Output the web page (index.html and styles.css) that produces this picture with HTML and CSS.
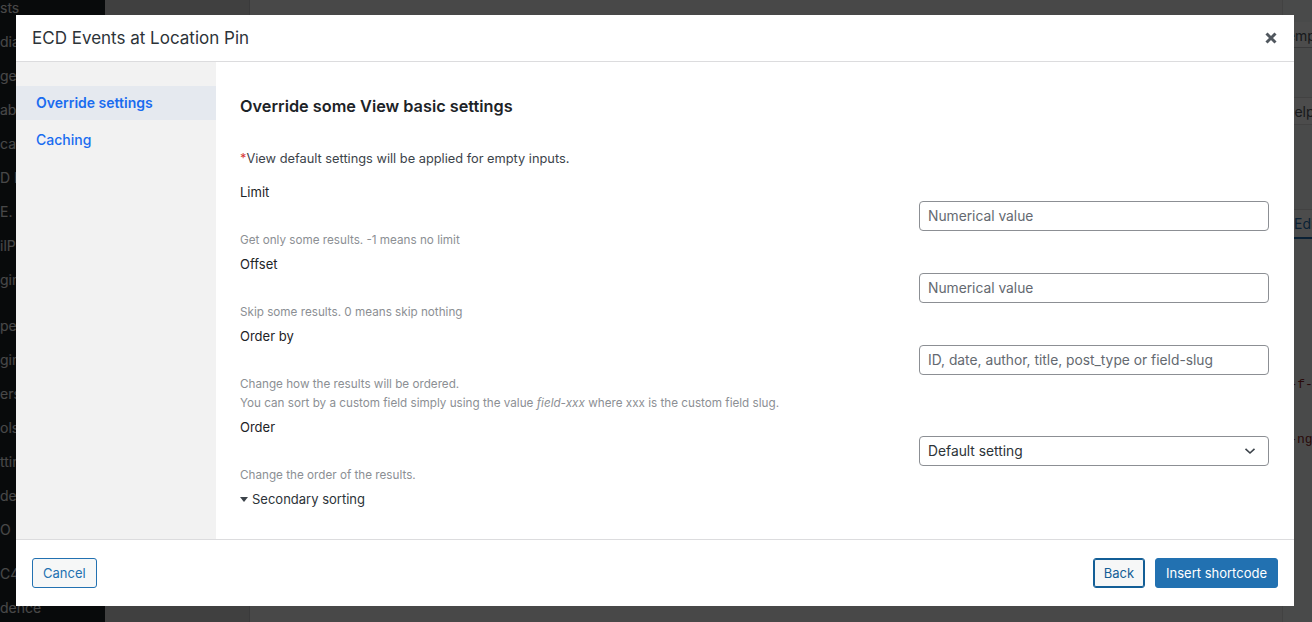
FILE: index.html
```html
<!DOCTYPE html>
<html lang="en">
<head>
<meta charset="utf-8">
<title>ECD Events at Location Pin</title>
<link rel="stylesheet" href="styles.css">
</head>
<body>
<div class="admin">
  <nav class="admin-menu">
    <div class="menu-item">sts</div>
    <div class="menu-item">dia</div>
    <div class="menu-item">ges</div>
    <div class="menu-item">aba</div>
    <div class="menu-item">cat</div>
    <div class="menu-item">D E</div>
    <div class="menu-item">E. C</div>
    <div class="menu-item">ilP</div>
    <div class="menu-item">gin</div>
    <div class="menu-item menu-item--sep">pe</div>
    <div class="menu-item">gin</div>
    <div class="menu-item">ers</div>
    <div class="menu-item">ols</div>
    <div class="menu-item">ttin</div>
    <div class="menu-item">de</div>
    <div class="menu-item">O</div>
    <div class="menu-item menu-item--sep2">C4V</div>
    <div class="menu-item">dence</div>
  </nav>
  <main class="admin-main">
    <div class="side-panel"></div>
    <div class="editor"></div>
    <aside class="meta-col">
      <div class="meta-head">Temp</div>
      <div class="meta-help">Help</div>
      <div class="meta-edit"><span>Edi</span></div>
      <div class="meta-code meta-code--a">wpv-f-</div>
      <div class="meta-code meta-code--b">stri-ng-</div>
    </aside>
  </main>
</div>

<div class="backdrop"></div>

<div class="dialog" role="dialog" aria-labelledby="dialog-title">
  <header class="dialog-header">
    <h1 class="dialog-title" id="dialog-title">ECD Events at Location Pin</h1>
    <button class="dialog-close" type="button" aria-label="Close">
      <svg width="12" height="12" viewBox="0 0 12 12" aria-hidden="true">
        <path d="M1.5 1.5 L10.5 10.5 M10.5 1.5 L1.5 10.5" stroke="#50575e" stroke-width="3" stroke-linecap="butt" fill="none"/>
      </svg>
    </button>
  </header>

  <div class="dialog-body">
    <nav class="dialog-nav">
      <a class="nav-item nav-item--active" href="#">Override settings</a>
      <a class="nav-item" href="#">Caching</a>
    </nav>

    <section class="dialog-content">
      <h2 class="content-title">Override some View basic settings</h2>
      <p class="content-note"><span class="req">*</span>View default settings will be applied for empty inputs.</p>

      <div class="field">
        <label class="field-label" for="f-limit">Limit</label>
        <div class="field-control"><input class="text-input" id="f-limit" type="text" placeholder="Numerical value"></div>
        <p class="field-desc">Get only some results. -1 means no limit</p>
      </div>

      <div class="field">
        <label class="field-label" for="f-offset">Offset</label>
        <div class="field-control"><input class="text-input" id="f-offset" type="text" placeholder="Numerical value"></div>
        <p class="field-desc">Skip some results. 0 means skip nothing</p>
      </div>

      <div class="field">
        <label class="field-label" for="f-orderby">Order by</label>
        <div class="field-control"><input class="text-input" id="f-orderby" type="text" placeholder="ID, date, author, title, post_type or field-slug"></div>
        <p class="field-desc">Change how the results will be ordered.<br>You can sort by a custom field simply using the value <em>field-xxx</em> where xxx is the custom field slug.</p>
      </div>

      <div class="field">
        <span class="field-label">Order</span>
        <div class="field-control">
          <div class="select-box">
            <span>Default setting</span>
            <svg width="12" height="8" viewBox="0 0 12 8" aria-hidden="true">
              <path d="M1.5 1.8 L6 6 L10.5 1.8" stroke="#3c434a" stroke-width="1.6" fill="none"/>
            </svg>
          </div>
        </div>
        <p class="field-desc">Change the order of the results.</p>
      </div>

      <div class="disclosure"><span class="disclosure-caret"></span>Secondary sorting</div>
    </section>
  </div>

  <footer class="dialog-footer">
    <button class="btn btn-secondary" type="button">Cancel</button>
    <div class="footer-actions">
      <button class="btn btn-secondary btn-back" type="button">Back</button>
      <button class="btn btn-primary" type="button">Insert shortcode</button>
    </div>
  </footer>
</div>
</body>
</html>
```

FILE: styles.css
```css
* {
  box-sizing: border-box;
}

html,
body {
  margin: 0;
  padding: 0;
  width: 1312px;
  height: 622px;
  overflow: hidden;
  font-family: Inter, "Noto Sans", "Liberation Sans", sans-serif;
}

/* ---------- admin page underneath ---------- */
.admin {
  display: flex;
  height: 622px;
  background: #f0f0f1;
}

.admin-menu {
  width: 105px;
  flex-shrink: 0;
  background: #1d2327;
  margin-top: -9px;
  height: 640px;
}

.menu-item {
  height: 34px;
  line-height: 34px;
  font-size: 14px;
  color: #f0f0f1;
  white-space: nowrap;
}

.menu-item--sep {
  margin-top: 12px;
}

.menu-item--sep2 {
  margin-top: 10px;
}

.admin-main {
  flex: 1;
  display: flex;
}

.side-panel {
  width: 145px;
  background: #d6d6d8;
  border-right: 1px solid #c3c4c7;
}

.editor {
  flex: 1;
  background: #f0f0f1;
}

.meta-col {
  width: 30px;
  background: #f6f7f7;
  border-left: 1px solid #dcdcde;
  font-size: 14px;
  color: #50575e;
  white-space: nowrap;
}

.meta-head {
  margin-top: 22px;
  margin-left: -4px;
  height: 26px;
  line-height: 28px;
  background: #fff;
  border-bottom: 1px solid #c3c4c7;
}

.meta-help {
  margin-top: 49px;
  height: 28px;
  line-height: 28px;
  padding-left: 1px;
  background: #fff;
  border-top: 1px solid #dcdcde;
  border-bottom: 1px solid #dcdcde;
}

.meta-edit {
  margin-top: 84px;
  height: 30px;
  line-height: 28px;
  padding-left: 11px;
  color: #2271b1;
  background: #fff;
  border-top: 1px solid #dcdcde;
  border-bottom: 2px solid #2271b1;
}

.meta-code {
  font-family: "Liberation Mono", monospace;
  font-size: 13px;
  color: #8a2424;
  line-height: 18px;
}

.meta-code--a {
  margin-top: 137px;
  margin-left: -17px;
}

.meta-code--b {
  margin-top: 37px;
  margin-left: -25px;
}

.backdrop {
  position: fixed;
  inset: 0;
  background: rgba(0, 0, 0, 0.7);
}

/* ---------- dialog ---------- */
.dialog {
  position: fixed;
  left: 16px;
  top: 15px;
  width: 1278px;
  height: 591px;
  background: #fff;
  display: flex;
  flex-direction: column;
  color: #1d2327;
}

.dialog-header {
  height: 47px;
  flex-shrink: 0;
  border-bottom: 1px solid #dcdcde;
  display: flex;
  align-items: center;
  justify-content: space-between;
  padding: 0 17px 0 16px;
}

.dialog-title {
  margin: 0;
  font-size: 17px;
  font-weight: 400;
  color: #2c3338;
  line-height: 24px;
}

.dialog-close {
  border: 0;
  background: none;
  padding: 0;
  width: 12px;
  height: 12px;
  display: flex;
  cursor: pointer;
}

.dialog-body {
  flex: 1;
  display: flex;
  min-height: 0;
}

.dialog-nav {
  width: 200px;
  flex-shrink: 0;
  background: #f2f2f2;
  padding-top: 24px;
  display: flex;
  flex-direction: column;
  gap: 3px;
}

.nav-item {
  display: block;
  padding: 8px 20px;
  line-height: 18px;
  font-size: 14px;
  font-weight: 500;
  color: #1a6cf0;
  text-decoration: none;
}

.nav-item--active {
  background: #e5e9ef;
  font-weight: 600;
}

.dialog-content {
  flex: 1;
  padding: 32px 25px 0 24px;
}

.content-title {
  margin: 0;
  font-size: 16.3px;
  font-weight: 600;
  line-height: 24px;
  color: #1d2327;
}

.content-note {
  margin: 32px 0 15px;
  font-size: 12.8px;
  line-height: 18px;
  color: #3c434a;
}

.req {
  color: #d63638;
}

.field {
  margin-bottom: 5px;
}

.field-label {
  display: block;
  font-size: 13px;
  line-height: 18px;
  color: #1d2327;
}

.field-control {
  display: flex;
  justify-content: flex-end;
}

.text-input,
.select-box {
  width: 350px;
  height: 30px;
  border: 1px solid #8c8f94;
  border-radius: 4px;
  padding: 0 8px;
  font-family: inherit;
  font-size: 13.8px;
  color: #2c3338;
  background: #fff;
  outline: none;
}

.text-input::placeholder {
  color: #646970;
  opacity: 1;
}

.select-box {
  display: flex;
  align-items: center;
  justify-content: space-between;
  padding-right: 12px;
}

.field-desc {
  margin: 0;
  font-size: 11.7px;
  line-height: 19px;
  color: #8c8f94;
}

.disclosure {
  display: flex;
  align-items: center;
  gap: 4px;
  font-size: 13px;
  line-height: 18px;
  color: #2c3338;
}

.disclosure-caret {
  width: 0;
  height: 0;
  border-left: 4px solid transparent;
  border-right: 4px solid transparent;
  border-top: 5px solid #3c434a;
}

.dialog-footer {
  height: 67px;
  flex-shrink: 0;
  border-top: 1px solid #dcdcde;
  display: flex;
  align-items: center;
  justify-content: space-between;
  padding: 0 16px;
}

.footer-actions {
  display: flex;
  gap: 10px;
}

.btn {
  height: 30px;
  padding: 0 10px;
  border-radius: 3px;
  font-family: inherit;
  font-size: 13px;
  line-height: 28px;
  cursor: pointer;
}

.btn-secondary {
  border: 1px solid #2271b1;
  background: #f6f7f7;
  color: #2271b1;
}

.btn-back {
  color: #135e96;
  border-color: #135e96;
  box-shadow: 0 0 0 1px #135e96 inset;
  background: #f6f7f7;
}

.btn-primary {
  border: 1px solid #2271b1;
  background: #2271b1;
  color: #fff;
}
```
